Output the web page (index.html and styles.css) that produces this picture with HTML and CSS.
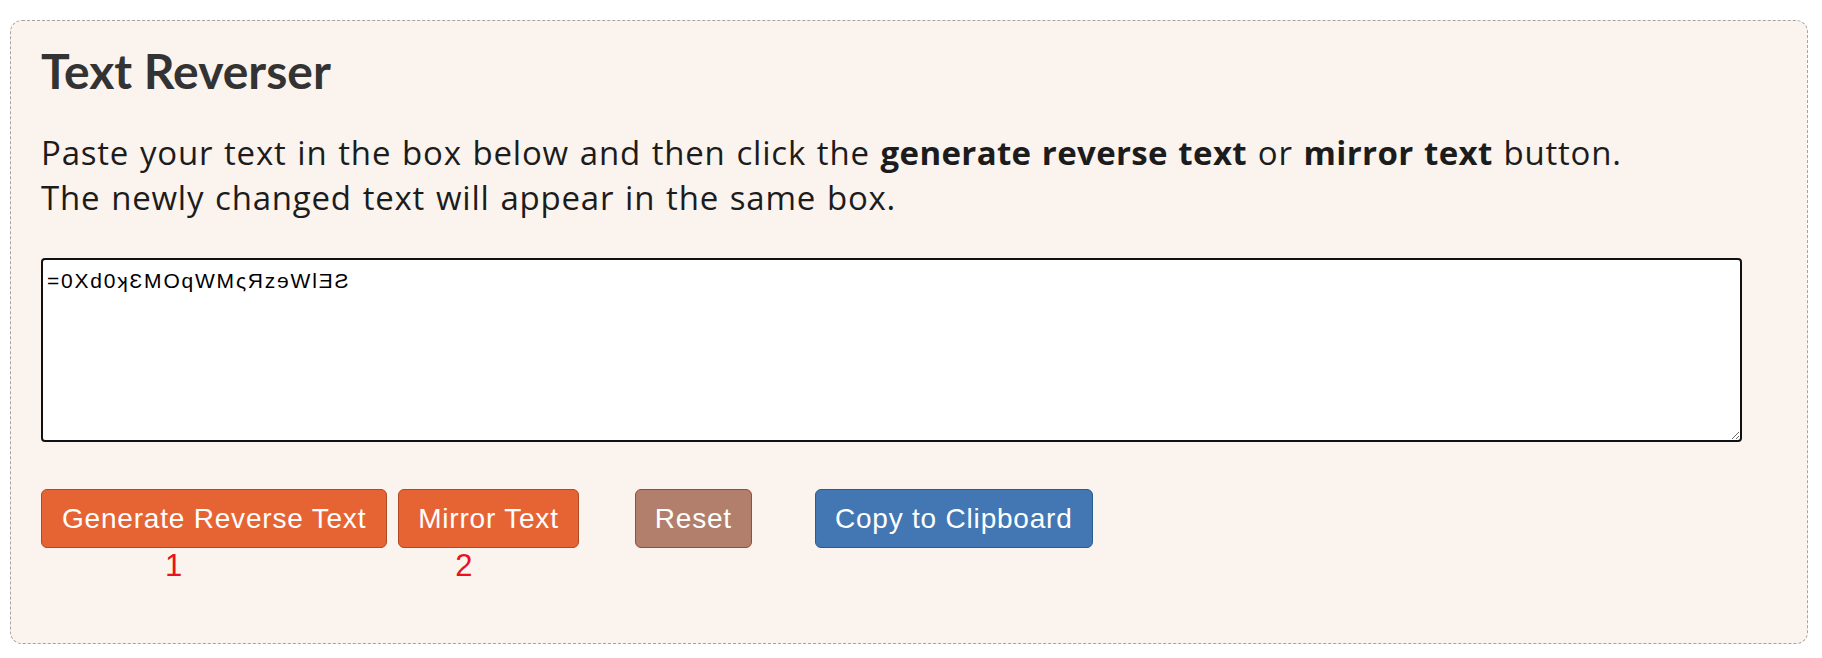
FILE: index.html
```html
<!DOCTYPE html>
<html lang="en">
<head>
<meta charset="utf-8">
<title>Text Reverser</title>
<link rel="stylesheet" href="styles.css">
</head>
<body>
<div class="page">
  <section class="panel">
    <h1 class="title">Text Reverser</h1>
    <p class="intro">Paste your text in the box below and then click the <strong>generate reverse text</strong> or <strong>mirror text</strong> button.<br>The newly changed text will appear in the same box.</p>
    <textarea class="text-box" spellcheck="false">=0Xd0ʞƐMOqWMςЯzɘWlƎƧ</textarea>
    <div class="actions">
      <span class="btn-wrap">
        <button class="btn btn-orange btn-wide">Generate Reverse Text</button>
        <span class="mark mark-1">1</span>
      </span>
      <span class="btn-wrap btn-gap-small">
        <button class="btn btn-orange">Mirror Text</button>
        <span class="mark mark-2">2</span>
      </span>
      <button class="btn btn-reset">Reset</button>
      <button class="btn btn-copy">Copy to Clipboard</button>
    </div>
  </section>
</div>
</body>
</html>
```

FILE: styles.css
```css
html, body {
  margin: 0;
  padding: 0;
  background: #ffffff;
}

.page {
  padding: 20px 14px 14px 10px;
}

.panel {
  background: #fbf3ee;
  border: 1px dashed #a8a39f;
  border-radius: 12px;
  padding: 0 30px 95px 30px;
  font-family: Lato, "Open Sans", sans-serif;
}

.title {
  margin: 22px 0 0 0;
  font-size: 48px;
  line-height: 56px;
  font-weight: 700;
  color: #333333;
}

.intro {
  margin: 31px 0 0 0;
  font-family: "Open Sans", Lato, sans-serif;
  font-size: 33px;
  line-height: 45px;
  color: #1c1c1c;
  letter-spacing: 0.78px;
  word-spacing: 1.5px;
}

.intro strong {
  font-weight: 700;
  letter-spacing: 0.35px;
}

.text-box {
  display: block;
  box-sizing: border-box;
  margin: 38px 0 0 0;
  width: calc(100% - 35px);
  height: 184px;
  padding: 2px 4px;
  border: 2px solid #111111;
  border-radius: 4px;
  background: #ffffff;
  font-family: "Liberation Sans", Arial, "DejaVu Sans", sans-serif;
  font-size: 21px;
  line-height: 38px;
  letter-spacing: 1.8px;
  color: #000000;
  outline: none;
}

.actions {
  display: flex;
  align-items: flex-start;
  margin-top: 47px;
}

.btn-wrap {
  position: relative;
  display: block;
}

.btn {
  display: block;
  height: 59px;
  padding: 0 19px;
  border-radius: 6px;
  border: 1px solid transparent;
  font-family: "Liberation Sans", Arial, sans-serif;
  font-size: 28px;
  letter-spacing: 0.8px;
  color: #ffffff;
  cursor: pointer;
}

.btn-wide {
  padding: 0 20px;
}

.btn-orange {
  background: #e66434;
  border-color: #b04a22;
}

.btn-gap-small {
  margin-left: 11px;
}

.btn-reset {
  margin-left: 56px;
  background: #b17f6b;
  border-color: #a04a2e;
}

.btn-copy {
  margin-left: 63px;
  background: #4277b3;
  border-color: #2d5b8f;
}

.mark {
  position: absolute;
  top: 100%;
  font-family: "Liberation Sans", Arial, sans-serif;
  font-size: 31px;
  line-height: 36px;
  color: #e8141b;
}

.mark-1 {
  left: 124px;
}

.mark-2 {
  left: 57px;
}
```
